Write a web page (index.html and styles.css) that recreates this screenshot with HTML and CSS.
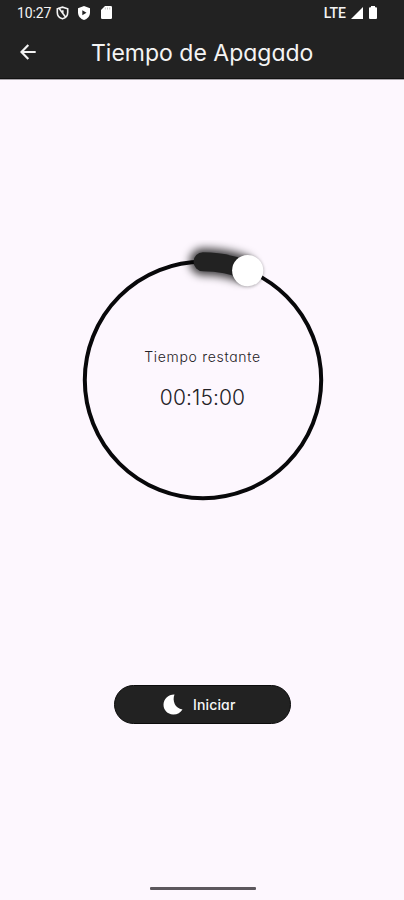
FILE: index.html
```html
<!DOCTYPE html>
<html lang="es">
<head>
<meta charset="utf-8">
<meta name="viewport" content="width=device-width, initial-scale=1">
<title>Tiempo de Apagado</title>
<link rel="stylesheet" href="styles.css">
</head>
<body>
<div class="screen">
  <header class="header">
    <div class="status">
      <div class="status-left">
        <span class="clock">10:27</span>
        <svg class="ic-alarm" width="13" height="14" viewBox="0 0 13 14" fill="none" stroke="#f4f4f4" stroke-width="1.600"><path d="M3 2.200 1.300 2.800V6.500C1.300 9.500 3.500 12 6.500 12.800c3-.8 5.200-3.300 5.200-6.300V2.800L6.500 1.200 3 2.200l6.300 8.600M6.800 4.200v3"/></svg>
        <svg class="ic-shield" width="12" height="14" viewBox="0 0 12 14"><path d="M6 0 12 2.200V6.500C12 10 9.500 13 6 14 2.500 13 0 10 0 6.500V2.200Z" fill="#fff"/><path d="M4.300 4.200 8.500 6.700 4.300 9.200Z" fill="#222"/></svg>
        <svg class="ic-card" width="11" height="13" viewBox="0 0 11 13"><path d="M4 0H9.700Q11 0 11 1.300V11.700Q11 13 9.700 13H1.300Q0 13 0 11.700V4Z" fill="#fff"/><path d="M4.300 1.500v2M6.500 1.500v2M8.700 1.500v2" stroke="#aaa" stroke-width=".7"/></svg>
      </div>
      <div class="status-right">
        <span class="network">LTE</span>
        <svg class="ic-signal" width="12" height="12" viewBox="0 0 12 12"><path d="M12 0V12H0Z" fill="#fff"/></svg>
        <svg class="ic-battery" width="8" height="13" viewBox="0 0 8 13"><path d="M2 0H6V1.300H7Q8 1.300 8 2.300V12Q8 13 7 13H1Q0 13 0 12V2.300Q0 1.300 1 1.300H2Z" fill="#fff"/></svg>
      </div>
    </div>
    <div class="appbar">
      <svg class="back" width="16" height="16" viewBox="0 0 16 16" fill="none" stroke="#f2f2f2" stroke-width="2.200"><path d="M15.700 8H1.800M8.300 1 1.500 8l6.800 7"/></svg>
      <h1 class="title">Tiempo de Apagado</h1>
    </div>
  </header>
  <main class="main">
    <div class="dial">
      <svg class="ring" width="280" height="280" viewBox="0 0 280 280">
        <defs>
          <filter id="glow" filterUnits="userSpaceOnUse" x="90" y="-20" width="150" height="100"><feGaussianBlur stdDeviation="4.500"/></filter>
          <filter id="soft" x="-50%" y="-50%" width="200%" height="200%"><feGaussianBlur stdDeviation="1.800"/></filter>
        </defs>
        <circle cx="140" cy="140" r="118.200" fill="none" stroke="#08080a" stroke-width="4"/>
        <path d="M140 21.800A118.200 118.200 0 0 1 178 28" fill="none" stroke="#000" stroke-opacity=".75" stroke-width="27" stroke-linecap="round" filter="url(#glow)"/>
        <path d="M140 21.800A118.200 118.200 0 0 1 184.700 30.600" fill="none" stroke="#222" stroke-width="19" stroke-linecap="round"/>
        <circle cx="184.900" cy="31.200" r="16" fill="#000" fill-opacity=".25" filter="url(#soft)"/>
        <circle cx="184.700" cy="30.600" r="15.600" fill="#fff"/>
      </svg>
      <div class="readout">
        <div class="label">Tiempo restante</div>
        <div class="time">00:15:00</div>
      </div>
    </div>
    <button class="start">
      <svg class="moon" width="20" height="21" viewBox="0 0 20 21"><path d="M11.500.5C9 6.500 12 14.500 19.500 15.500 17.500 18.800 14 20.700 10 20.500 4.500 20 .5 16 .5 10.700.5 5 5.500.3 11.500.5Z" fill="#fff"/></svg>
      <span class="start-text">Iniciar</span>
    </button>
  </main>
  <div class="home"></div>
</div>
</body>
</html>
```
FILE: styles.css
```css
* { box-sizing: border-box; }
body { margin: 0; background: #fdf7fe; font-family: Inter, "Liberation Sans", sans-serif; font-feature-settings: "cv11"; }
.screen { width: 404px; height: 900px; display: flex; flex-direction: column; align-items: center; overflow: hidden; }
.header { width: 100%; height: 79px; flex: none; background: #222; border-bottom: 1px solid #111; box-shadow: 0 1px 0 #aaa6ab; color: #f4f4f4; }
.status { height: 25px; display: flex; justify-content: space-between; padding: 0 27px 0 17px; font-family: Roboto, sans-serif; }
.status-left, .status-right { display: flex; align-items: center; }
.clock { font-size: 14px; letter-spacing: -0.1px; }
.ic-alarm { margin-left: 5px; }
.ic-shield { margin-left: 9px; }
.ic-card { margin-left: 11px; }
.network { font-size: 14px; font-weight: 500; letter-spacing: 0; }
.ic-signal { margin-left: 5px; }
.ic-battery { margin-left: 6px; }
.appbar { height: 54px; display: flex; align-items: center; padding-left: 20px; }
.back { flex: none; }
.title { margin: 1px 0 0 55px; font-size: 23px; font-weight: 400; line-height: 30px; letter-spacing: 0; white-space: nowrap; }
.main { flex: 1; display: flex; flex-direction: column; align-items: center; padding-left: 1px; }
.dial { margin-top: 161px; width: 280px; height: 280px; display: grid; }
.ring, .readout { grid-area: 1 / 1; }
.readout { padding-top: 107px; text-align: center; color: #242226; }
.label { font-size: 14px; font-weight: 300; line-height: 20px; letter-spacing: 0.7px; white-space: nowrap; }
.time { margin-top: 17px; font-size: 21px; font-weight: 300; line-height: 28px; letter-spacing: 0.1px; white-space: nowrap; }
.start { margin-top: 165px; width: 177px; height: 39px; border: 1px solid #0c0c0c; border-radius: 20px; background: #222; color: #f6f6f6; display: flex; align-items: center; justify-content: flex-start; padding: 0 0 0 48px; font: inherit; font-size: 14px; }
.start-text { margin-left: 10px; letter-spacing: 0.15px; font-weight: 500; }
.home { flex: none; width: 106px; height: 3px; margin: 0 0 10px 1px; border-radius: 1px; background: #5c575d; }
```
